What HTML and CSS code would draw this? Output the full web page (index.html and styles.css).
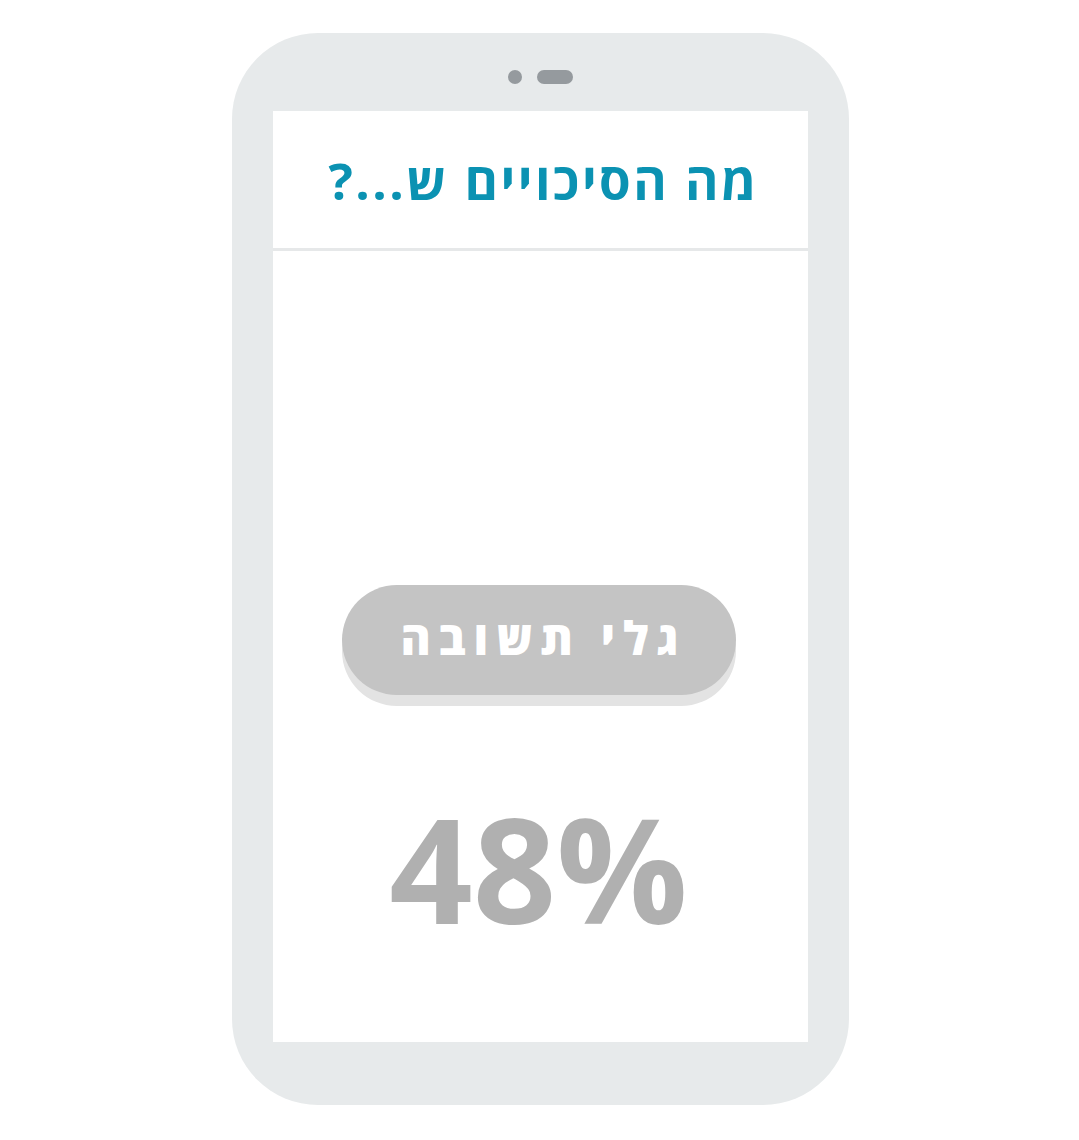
FILE: index.html
```html
<!DOCTYPE html>
<html lang="he" dir="rtl">
<head>
<meta charset="utf-8">
<link rel="stylesheet" href="styles.css">
</head>
<body>
<div class="phone">
  <div class="sensors">
    <span class="cam"></span>
    <span class="speaker"></span>
  </div>
  <div class="screen">
    <div class="header">
      <h1 class="title">מה הסיכויים ש...?</h1>
    </div>
    <div class="content">
      <button class="reveal">גלי תשובה</button>
      <div class="percent" dir="ltr">48%</div>
    </div>
  </div>
</div>
</body>
</html>
```
FILE: styles.css
```css
html, body {
  margin: 0;
  padding: 0;
  background: #ffffff;
}
body {
  font-family: "Open Sans", "Liberation Sans", sans-serif;
  display: flex;
  justify-content: center;
  padding-top: 33px;
  padding-left: 2px;
}
.phone {
  width: 535px;
  background: #e7eaeb;
  border-radius: 86px;
  padding: 0 41px 63px 41px;
  display: flex;
  flex-direction: column;
}
.sensors {
  height: 78px;
  display: flex;
  flex-direction: row-reverse;
  justify-content: center;
  align-items: center;
  gap: 15px;
  padding-top: 9px;
  box-sizing: border-box;
}
.cam {
  width: 14px;
  height: 14px;
  border-radius: 50%;
  background: #959a9e;
}
.speaker {
  width: 36px;
  height: 14px;
  border-radius: 7px;
  background: #959a9e;
}
.screen {
  background: #ffffff;
  height: 931px;
  display: flex;
  flex-direction: column;
}
.header {
  height: 137px;
  border-bottom: 3px solid #e6e8e9;
  display: flex;
  align-items: center;
  justify-content: center;
}
.title {
  margin: 0;
  font-size: 51px;
  font-weight: 700;
  color: #0b92b2;
  letter-spacing: 2.5px;
  padding-top: 0;
  padding-left: 6px;
}
.content {
  display: flex;
  flex-direction: column;
  align-items: center;
  padding-top: 334px;
}
.reveal {
  width: 394px;
  height: 110px;
  border: none;
  border-radius: 55px;
  background: #c4c4c4;
  box-shadow: 0 11px 0 #e3e3e3;
  color: #ffffff;
  font-family: "Open Sans", "Liberation Sans", sans-serif;
  font-size: 46px;
  font-weight: 800;
  letter-spacing: 8px;
  padding: 0 0 6px 10px;
  margin-right: 4px;
}
.percent {
  margin-top: 100px;
  font-size: 146px;
  font-weight: 700;
  line-height: 1;
  color: #b0b0b0;
  margin-right: 4px;
}
```
